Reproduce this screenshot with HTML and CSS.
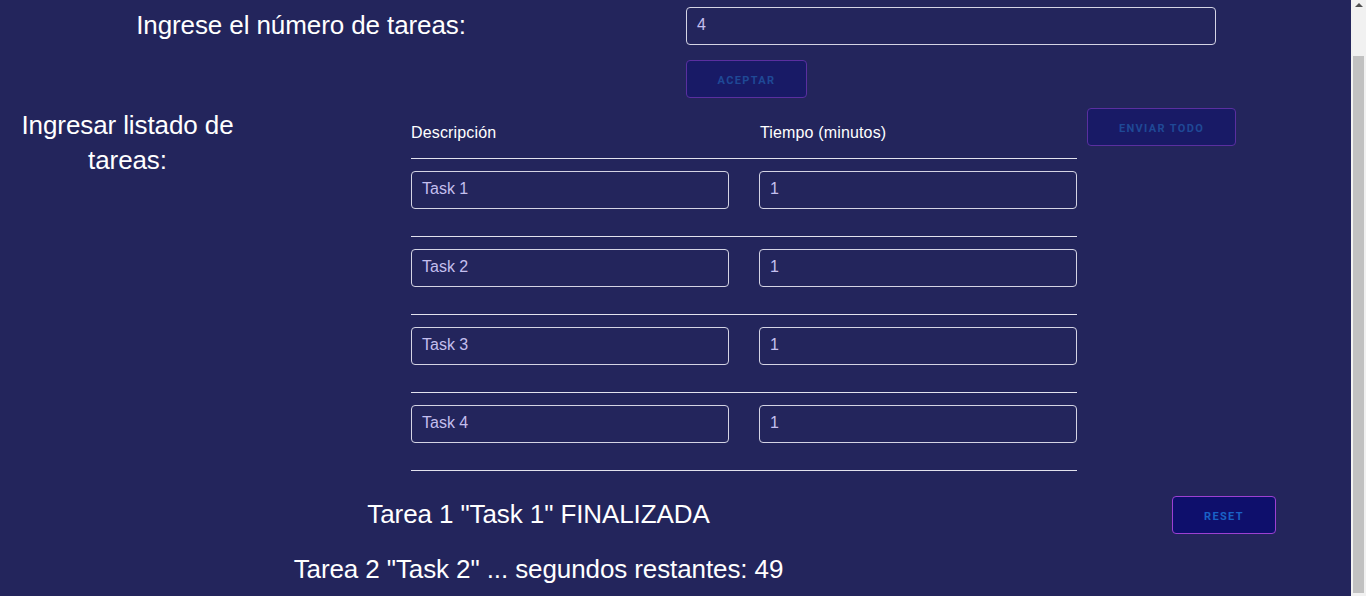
FILE: index.html
```html
<!DOCTYPE html>
<html lang="es">
<head>
<meta charset="utf-8">
<title>Tareas</title>
<link rel="stylesheet" href="styles.css">
</head>
<body>
<div class="screen">
  <main class="app">
    <section class="count-row">
      <h2 class="label count-label">Ingrese el número de tareas:</h2>
      <div class="count-controls">
        <div class="field count-field">4</div>
        <button class="btn btn-disabled btn-accept">Aceptar</button>
      </div>
    </section>

    <section class="list-row">
      <h2 class="label list-label">Ingresar listado de tareas:</h2>
      <div class="task-table">
        <div class="task-head">
          <span>Descripción</span>
          <span class="head-time">Tiempo (minutos)</span>
        </div>
        <div class="task-row"><div class="field">Task 1</div><div class="field">1</div></div>
        <div class="task-row"><div class="field">Task 2</div><div class="field">1</div></div>
        <div class="task-row"><div class="field">Task 3</div><div class="field">1</div></div>
        <div class="task-row"><div class="field">Task 4</div><div class="field">1</div></div>
      </div>
      <button class="btn btn-disabled btn-send">Enviar todo</button>
    </section>

    <section class="status-row">
      <div class="status-col">
        <p class="status status-first">Tarea 1 "Task 1" FINALIZADA</p>
      </div>
      <button class="btn btn-reset">Reset</button>
    </section>
    <div class="status-col">
      <p class="status status-second">Tarea 2 "Task 2" ... segundos restantes: 49</p>
    </div>
  </main>
  <div class="scrollbar">
    <div class="scroll-arrow"></div>
    <div class="scroll-thumb"></div>
  </div>
</div>
</body>
</html>
```

FILE: styles.css
```css
* { box-sizing: border-box; }

html, body {
  margin: 0;
  padding: 0;
  height: 100%;
  overflow: hidden;
}

body {
  background: #23255c;
  color: #ffffff;
  font-family: "Liberation Sans", Arial, sans-serif;
}

.screen {
  display: flex;
  height: 596px;
}

.app {
  flex: 1;
  min-width: 0;
}

.label {
  margin: 0;
  font-weight: 400;
  font-size: 26px;
  letter-spacing: -0.1px;
  text-align: center;
  color: #ffffff;
}

/* Row 1 */
.count-row {
  display: flex;
  align-items: flex-start;
  padding-top: 7px;
}

.count-label {
  width: 602px;
  line-height: 30px;
  margin-top: 3px;
}

.count-controls {
  margin-left: 84px;
  display: flex;
  flex-direction: column;
  align-items: flex-start;
  gap: 15px;
}

.field {
  height: 38px;
  border: 1px solid #d4d4e4;
  border-radius: 4px;
  padding: 0 10px 2px;
  display: flex;
  align-items: center;
  font-size: 16px;
  color: #c4bfee;
  background: transparent;
}

.count-field {
  width: 530px;
}

.btn {
  height: 38px;
  border-radius: 4px;
  font-family: Roboto, "Liberation Sans", sans-serif;
  font-weight: 700;
  font-size: 11px;
  letter-spacing: 1.35px;
  text-transform: uppercase;
  padding: 2px 0 0;
  cursor: pointer;
}

.btn-disabled {
  background: #181a66;
  border: 1px solid #5a2fa0;
  color: #1f4996;
}

.btn-accept { width: 121px; }

/* Row 2 */
.list-row {
  display: flex;
  align-items: flex-start;
  margin-top: 10px;
}

.list-label {
  width: 255px;
  line-height: 35px;
}

.task-table {
  width: 666px;
  margin-left: 156px;
}

.task-head {
  display: grid;
  grid-template-columns: 318px 318px;
  column-gap: 30px;
  height: 51px;
  align-items: center;
  border-bottom: 1px solid #e2e2ee;
  font-size: 16px;
  letter-spacing: 0.15px;
}

.head-time { padding-left: 1px; }

.task-row {
  display: grid;
  grid-template-columns: 318px 318px;
  column-gap: 30px;
  padding: 12px 0 27px;
  border-bottom: 1px solid #e2e2ee;
}

.btn-send {
  width: 149px;
  margin-left: 10px;
}

/* Status */
.status-row {
  display: flex;
  align-items: center;
  margin-top: 25px;
}

.status-col {
  width: 1077px;
  text-align: center;
}

.status {
  margin: 0;
  font-size: 26px;
  line-height: 30px;
  letter-spacing: -0.1px;
  color: #ffffff;
}

.status-first {
  height: 38px;
  line-height: 36px;
}

.status-second {
  margin-top: 20px;
}

.btn-reset {
  width: 104px;
  margin-left: 95px;
  background: #0e0f6c;
  border: 1px solid #9c40d2;
  color: #1a62c6;
}

/* Fake window scrollbar */
.scrollbar {
  width: 15px;
  flex: 0 0 15px;
  background: #f1f1f1;
  display: flex;
  flex-direction: column;
  align-items: center;
}

.scroll-arrow {
  width: 0;
  height: 0;
  margin-top: 3px;
  border-left: 4px solid transparent;
  border-right: 4px solid transparent;
  border-bottom: 4px solid #505050;
}

.scroll-thumb {
  width: 11px;
  height: 537px;
  margin-top: 49px;
  background: #c1c1c1;
}
```
